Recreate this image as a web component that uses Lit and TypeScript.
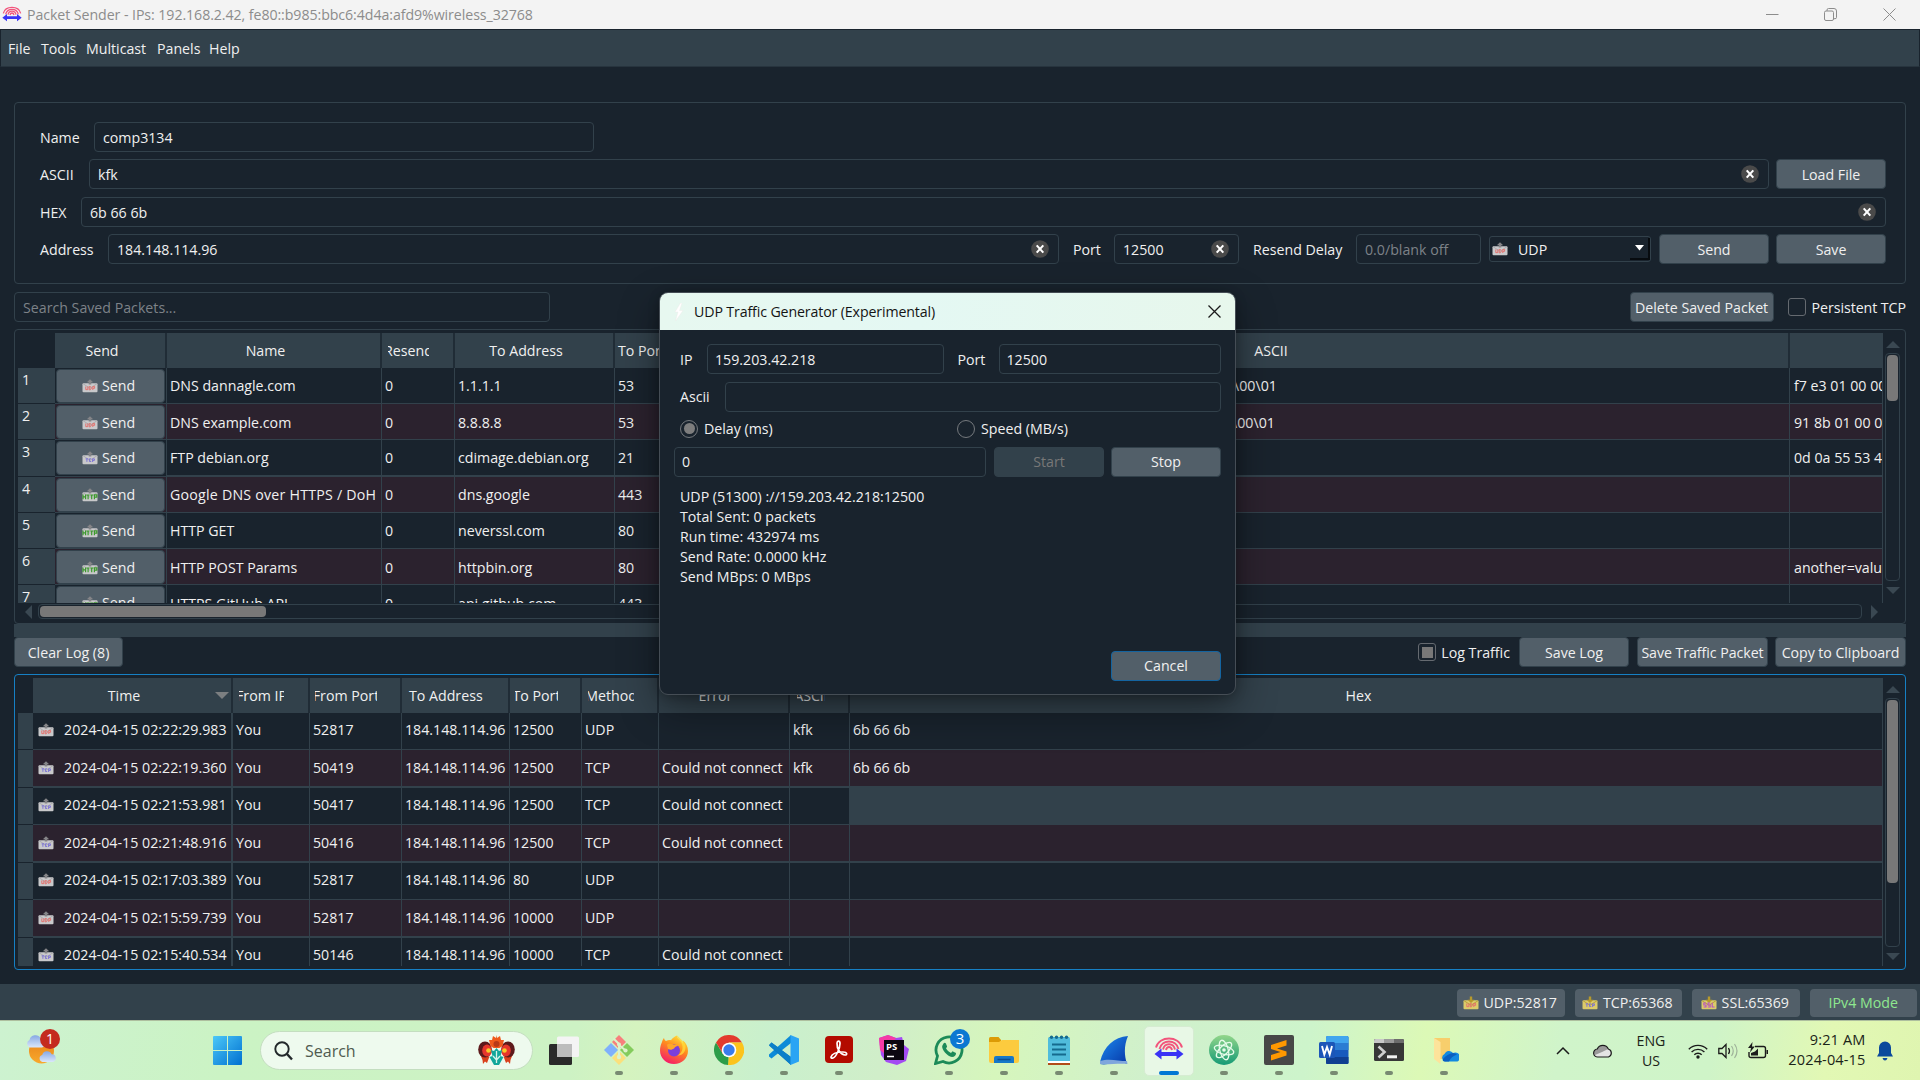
import { LitElement, html, css, svg } from "lit";
import { customElement } from "lit/decorators.js";

type Kind = "UDP" | "TCP" | "HTTP" | "SSL";
const INK: Record<Kind, string> = { UDP: "#e4706c", TCP: "#7b72d4", HTTP: "#3c9a2c", SSL: "#b650c8" };

const envelope = (kind: Kind, gold = false) => html`
  <svg class="env" width="16" height="14" viewBox="0 0 16 15" preserveAspectRatio="none">
    <rect x="0.5" y="4.5" width="15" height="9.7" rx="1" fill=${gold ? "#dccb6a" : "#c9c9cb"} />
    <path d="M1 5L8 10L15 5" fill="none" stroke=${gold ? "#b39b34" : "#a6a6aa"} stroke-width="0.9" />
    ${gold
      ? svg`<path d="M6.8 0.5h2.4v3.6h2.3L8 7.6L4.5 4.1h2.3z" fill="#b79a2c"/>`
      : svg`<path d="M8 0.3L11.2 3.6H9.3V6H6.7V3.6H4.8z" fill="#858588"/>`}
    ${kind === "HTTP"
      ? svg`<path d="M1 7v5M3.6 7v5M1 9.5h2.6M4.6 7.5h3M6.1 7.5V12M8.2 7.5h3M9.7 7.5V12M12.4 12V7.4h2.4v2.4h-2.4" fill="none" stroke=${INK.HTTP} stroke-width="1.2"/>`
      : kind === "UDP"
      ? svg`<path d="M3.8 8v3.4h2V8M7.2 8v3.6h1l1-1V9l-1-1zM10.8 11.8V8h1.8v2h-1.8" fill="none" stroke=${INK.UDP} stroke-width="1"/>`
      : kind === "SSL"
      ? svg`<path d="M5 7.6H2.8v2H5v2.1H2.6M9.2 7.6H7v2h2.2v2.1H6.8M11.2 7.2v4.5h2.4" fill="none" stroke=${INK.SSL} stroke-width="1.1"/>`
      : svg`<path d="M3.6 8.4h2.6M4.9 8.4V11.6M9.2 8.4H7.4v2.8h1.8M10.6 11.8V8.4h1.800v1.700h-1.800" fill="none" stroke=${INK.TCP} stroke-width="1"/>`}
  </svg>`;

const clearIcon = html`<svg class="clear" width="18" height="18" viewBox="0 0 18 18">
  <circle cx="9" cy="9" r="8.8" fill="#4a4a4a" />
  <path d="M5.7 5.4L12.3 12.6M12.3 5.4L5.7 12.6" stroke="#fff" stroke-width="2.1" />
</svg>`;

const senderLogo = (w: number) => html`<svg width=${w} height=${w} viewBox="0 0 30 30">
  <g fill="none" stroke="#f2557c" stroke-width="1.9">
    <path d="M2 12.5C5 0.5 25 0.5 28 12.5" /><path d="M5.5 14C8 4 22 4 24.5 14" />
    <path d="M9 14.5C10.5 7.5 19.5 7.5 21 14.5" /><path d="M12 15C13 11 17 11 18 15" />
  </g>
  <path d="M0.5 19L7.5 13.5V17H22.5V13.5L29.5 19L22.5 24.5V21H7.5V24.5Z" fill="#3a33f5" />
</svg>`;

const packets: { kind: Kind; name: string; addr: string; port: string; ascii: string; hex: string }[] = [
  { kind: "UDP", name: "DNS dannagle.com", addr: "1.1.1.1", port: "53", ascii: "\\00\\01", hex: "f7 e3 01 00 00" },
  { kind: "UDP", name: "DNS example.com", addr: "8.8.8.8", port: "53", ascii: "\\00\\01", hex: "91 8b 01 00 00" },
  { kind: "TCP", name: "FTP debian.org", addr: "cdimage.debian.org", port: "21", ascii: "", hex: "0d 0a 55 53 45" },
  { kind: "HTTP", name: "Google DNS over HTTPS / DoH", addr: "dns.google", port: "443", ascii: "", hex: "" },
  { kind: "HTTP", name: "HTTP GET", addr: "neverssl.com", port: "80", ascii: "", hex: "" },
  { kind: "HTTP", name: "HTTP POST Params", addr: "httpbin.org", port: "80", ascii: "", hex: "another=value" },
  { kind: "HTTP", name: "HTTPS GitHub API", addr: "api.github.com", port: "443", ascii: "", hex: "" },
];

const ERR = "Could not connect";
const log: [string, string, string, Kind, string, string, string][] = [
  ["2024-04-15 02:22:29.983", "52817", "12500", "UDP", "", "kfk", "6b 66 6b"],
  ["2024-04-15 02:22:19.360", "50419", "12500", "TCP", ERR, "kfk", "6b 66 6b"],
  ["2024-04-15 02:21:53.981", "50417", "12500", "TCP", ERR, "", ""],
  ["2024-04-15 02:21:48.916", "50416", "12500", "TCP", ERR, "", ""],
  ["2024-04-15 02:17:03.389", "52817", "80", "UDP", "", "", ""],
  ["2024-04-15 02:15:59.739", "52817", "10000", "UDP", "", "", ""],
  ["2024-04-15 02:15:40.534", "50146", "10000", "TCP", ERR, "", ""],
];

const ico = (body: unknown) => html`<svg width="30" height="30" viewBox="0 0 30 30">${body}</svg>`;

const apps: { art: unknown; run?: boolean; active?: boolean; badge?: string }[] = [
  { run: true, art: ico(svg`
    <path d="M15 0l7 7-7 7-7-7z" fill="#f77f7c"/><path d="M7 8l7 7-7 7-7-7z" fill="#7fb0fb"/>
    <path d="M23 8l7 7-7 7-7-7z" fill="#84cc5c"/><path d="M15 16l7 7-7 7-7-7z" fill="#fbe07c"/>
    <path d="M9.5 3.5L15 9v13M15 10l6 5" stroke="#dcf3cb" stroke-width="2" fill="none"/>
    <circle cx="15" cy="9.5" r="2" fill="#dcf3cb"/><circle cx="15" cy="22" r="2.2" fill="#dcf3cb"/><circle cx="21.5" cy="15.5" r="2.1" fill="#dcf3cb"/>`) },
  { run: true, art: ico(svg`
    <defs><linearGradient id="ff" x1="0.8" y1="0" x2="0.3" y2="1"><stop offset="0" stop-color="#ffe83c"/><stop offset=".45" stop-color="#ff8a1e"/><stop offset="1" stop-color="#f5186c"/></linearGradient></defs>
    <path d="M3 7c.5-2 1.5-3.5 2-4 .3 1.700 1 2.500 2 3 2-1 4-1 5-.8C13 3.500 16 1 18 .5c-.3 2 1 3 3 4.500 1 .7 2 2 2.500 3.500.6-.5.8-2 .5-3 3 2.500 5 6 5 10.500C29 23 23 29 15 29S1 23 1 15.500C1 12 2 9 3 7z" fill="url(#ff)"/>
    <circle cx="15" cy="15.500" r="6" fill="#7a3fdc"/><path d="M8 10c2-2 5-1 7 0 2-.5 3 0 4 1-2 0-3 1-4 2.500-2 1-3 2-6 .5z" fill="#ffa62a"/>
    <path d="M18 .5c-.3 4 5 5 5.500 11 .5 5-3 8-5 9 6 0 8.500-5 8-9.500-.5-4-4-6-8.500-10.500z" fill="#ffd93a" opacity=".8"/>`) },
  { run: true, art: ico(svg`
    <path d="M15 15L28 7.500A15 15 0 0 1 14 30z" fill="#fcc31c"/>
    <path d="M15 15L14 30A15 15 0 0 1 2 7.500L9 19z" fill="#2c9d49"/><path d="M2 7.500L9 19l6-11.500h13A15 15 0 0 0 2 7.500z" fill="#e33b2e"/>
    <path d="M14.300 30L21.500 18.500 28 7.500H15l6 8z" fill="#fcc31c"/><circle cx="15" cy="15" r="7.300" fill="#fff"/><circle cx="15" cy="15" r="5.700" fill="#3a7cec"/>`) },
  { run: true, art: ico(svg`
    <path d="M22 0L0 19.500v2L2.500 23.500 22 8z" fill="#0d8bd8"/><path d="M22 30L0 10.500 2.500 7.500 22 22z" fill="#0674bb"/>
    <path d="M0 10L2.500 7.500 22 22v8z" fill="#0c7fc9"/><path d="M21.500 0L30 3.500v23L21.500 30z" fill="#2aa4f4"/>`) },
  { run: true, art: ico(svg`
    <rect x="1" y="1" width="28" height="27" rx="4" fill="#b30b00"/>
    <path d="M7 22c1-3.500 7-5 12-5 4.500 0 4.500 3 2 3-4 0-8.500-6-8-12 .3-2.500 3-2.500 3 .5 0 5-4 13.500-7 14.500-1.500.5-2.200 0-2-1z" fill="none" stroke="#fff" stroke-width="1.7"/>`) },
  { art: ico(svg`
    <path d="M0 3L9 0l8 3 6-1 2 8 5 4-3 12-9 4-11-3L2 20z" fill="#a34bf2"/><path d="M0 3L9 0l8 3-11 16-5-4z" fill="#f53ba6"/>
    <rect x="5" y="5" width="20" height="20" fill="#0b0710"/>
    <text x="7" y="14.500" font-family="Open Sans" font-weight="700" font-size="9.500" fill="#fff">PS</text><path d="M8 21.500h7" stroke="#fff" stroke-width="1.500"/>`) },
  { run: true, badge: "3", art: ico(svg`
    <path d="M1.500 28.500l2-7.500A13 13 0 1 1 9 26.500z" fill="none" stroke="#1c8a58" stroke-width="2.800"/>
    <path d="M9.500 8.500c1-1 2-.8 2.500.3l1 2.400c.3.800-.5 1.400-1 2.100 1.200 2.200 2.700 3.600 5 4.600l1.500-1.700 3.500 1.700c.3 2.100-1.500 4-4 4C13 21.500 7.500 14 8.200 11z" fill="#1c8a58"/>`) },
  { run: true, art: ico(svg`
    <path d="M0 3.500q0-1.500 1.500-1.500h8l2.500 3v6H0z" fill="#dc9b06"/><path d="M0 7h10l3-2h17v21q0 2-2 2H2q-2 0-2-2z" fill="#fccb3e"/>
    <path d="M5 28v-5q0-2 2-2h16q2 0 2 2v5z" fill="#1778c8"/><path d="M8.500 24.500h13" stroke="#0b4f92" stroke-width="1.500"/>`) },
  { run: true, art: ico(svg`
    <rect x="4" y="2" width="22" height="25" rx="1.500" fill="#50bcdc"/><path d="M4 26h22v4H4z" fill="#b14c18"/><path d="M4 26h22v2H4z" fill="#fff"/>
    <path d="M8 9.500h14M8 14.500h14M8 19.500h14" stroke="#156a8e" stroke-width="2"/><g fill="#156a8e"><circle cx="7.500" cy="2.200" r="1.700"/><circle cx="12.500" cy="2.200" r="1.700"/><circle cx="17.500" cy="2.200" r="1.700"/><circle cx="22.500" cy="2.200" r="1.700"/></g>`) },
  { run: true, art: ico(svg`
    <defs><linearGradient id="ws" x1="0" y1="0" x2="1" y2="1"><stop offset="0" stop-color="#1d8bf0"/><stop offset="1" stop-color="#0636a6"/></linearGradient></defs>
    <path d="M1 27C5 11 15 2 29 1c-4 9-4 19-1 28C20 25 9 31 1 29z" fill="url(#ws)"/><path d="M1 26c9-3 18 0 27 0l.5 3C20 28 8 30 1 29z" fill="#7fa6dc"/>`) },
  { run: true, active: true, art: senderLogo(30) },
  { run: true, art: ico(svg`
    <defs><linearGradient id="at" x1="0" y1="0" x2="0" y2="1"><stop offset="0" stop-color="#92d68a"/><stop offset="1" stop-color="#159a75"/></linearGradient></defs>
    <circle cx="15" cy="15" r="15" fill="url(#at)"/><g fill="none" stroke="#e6fbea" stroke-width="1.300"><ellipse cx="15" cy="15" rx="10" ry="4.200" transform="rotate(15 15 15)"/><ellipse cx="15" cy="15" rx="10" ry="4.200" transform="rotate(75 15 15)"/><ellipse cx="15" cy="15" rx="10" ry="4.200" transform="rotate(135 15 15)"/></g><circle cx="15" cy="15" r="1.800" fill="#e6fbea"/>`) },
  { run: true, art: ico(svg`
    <rect width="30" height="30" rx="2" fill="#474747"/><path d="M7 10l15.500-5v5.500L13 13.600l9.500 2.900V20.500L7 25.500V20l9.500-3L7 14z" fill="#ff9800"/>`) },
  { run: true, art: ico(svg`
    <rect x="7" y="1" width="22.500" height="28" rx="1.500" fill="#185abd"/><path d="M7 8V2.500Q7 1 8.500 1H28q1.500 0 1.500 1.500V8z" fill="#41a5ee"/><path d="M7 8h22.500v7H7z" fill="#2b7cd3"/><path d="M7 22h22.500v5.500q0 1.500-1.500 1.500H8.500Q7 29 7 27.500z" fill="#103f91"/>
    <rect x="0" y="7" width="16" height="16" rx="1.500" fill="#1c56b8"/><path d="M3 11l2.300 8.500L8 12l2.700 7.500L13 11" fill="none" stroke="#fff" stroke-width="1.900"/>`) },
  { run: true, art: ico(svg`
    <rect y="4" width="30" height="22" rx="1.500" fill="#373737"/><path d="M0 8V5.500Q0 4 1.500 4H10v4z" fill="#c8c8c8"/><path d="M10 4h10v4H10z" fill="#9a9a9a"/><path d="M20 4h8.500Q30 4 30 5.500V8H20z" fill="#6c6c6c"/>
    <path d="M4.500 11.500l6 5.500-6 5.500" fill="none" stroke="#cfcfcf" stroke-width="2.600"/><path d="M13 21.800h10" stroke="#f2f2f2" stroke-width="3"/>`) },
  { run: true, art: ico(svg`
    <path d="M5 3h16v21H5z" fill="#f7ce6c"/><path d="M5 3l6.500 4v22L5 24z" fill="#fde39b"/>
    <path d="M16 26.500a4 4 0 0 1-.5-7.500 5 5 0 0 1 8.500-1 4.200 4.200 0 0 1 4.500 8.500z" fill="#1389e0"/><path d="M14 24q4-5 10-6 2 0 4 1.500-6 2-8 7h-5q-2-1-1-2.500z" fill="#0a5fc0"/>`) },
];

@customElement("app-root")
export class AppRoot extends LitElement {
  static styles = css`
    :host { display: block; width: 1920px; height: 1080px; overflow: hidden; position: relative; background: #19232d; color: #f0f0f0;
      font: 14.2px/20px "Open Sans", "Noto Sans", sans-serif; }
    * { box-sizing: border-box; }
    div, span, button { white-space: nowrap; }
    svg { display: block; flex: none; }
    .env { margin-bottom: 1px; }
    .screen { display: flex; flex-direction: column; height: 1080px; }
    .title { height: 29px; flex: none; background: #f3f3f3; color: #8c8c8c; display: flex; align-items: center; padding: 0 25px 0 2px; }
    .title span { margin-left: 5px; flex: 1; letter-spacing: -0.075px; }
    .title .wc { display: grid; grid-template-columns: 58px 59px 12px; align-items: center; }
    .menu { height: 38px; flex: none; background: #32414b; border: 1px solid #19232d; border-bottom: 1px solid #27343e; display: grid; grid-template-columns: 33px 45px 71px 52px 60px; padding: 2px 0 0 7px; align-items: center; }
    .main { height: 917px; flex: none; padding: 35px 14px 0; display: flex; flex-direction: column; }
    .group { height: 182px; flex: none; border: 1px solid #32414b; border-radius: 4px; padding: 19px 19px 0 25px; }
    .row { display: flex; height: 30px; align-items: center; margin-bottom: 7px; }
    .row.loose { margin-bottom: 8px; }
    .field { height: 30px; border: 1px solid #32414b; border-radius: 4px; padding: 0 9px 0 8px; display: flex; align-items: center; justify-content: space-between; }
    .lab { padding-top: 2px; }
    .val { padding-top: 2px; }
    .grow { flex: 1; }
    .hint { color: #7d8288; }
    .btn { height: 30px; background: #525f69; border: 1px solid #32414b; border-radius: 4px; display: flex; align-items: center; justify-content: center; padding-top: 1px; flex: none; }
    .l54 { width: 54px; } .l49 { width: 49px; } .l41 { width: 41px; } .l68 { width: 68px; } .l103 { width: 103px; }
    .w500 { width: 500px; } .w125 { width: 125px; } .w110 { width: 110px; }
    .g14 { margin-left: 14px; } .g8 { margin-left: 8px; } .g7 { margin-left: 7px; } .g9 { margin-left: 9px; } .g6 { margin-left: 6px; } .g5 { margin-left: 5px; } .g3 { margin-left: 3px; }
    .combo { width: 162px; height: 26px; border: 1px solid #32414b; border-radius: 3px; display: flex; align-items: center; padding-left: 2px; margin-left: 8px; }
    .combo .sel { margin-left: 10px; flex: 1; padding-top: 2px; }
    .combo .drop { width: 20px; height: 22px; border-right: 2px solid #070b0f; border-bottom: 2px solid #070b0f; display: grid; place-items: center; }
    .tools { height: 30px; flex: none; margin-top: 8px; display: flex; align-items: center; }
    .search { width: 536px; padding-left: 8px; }
    .push { margin-left: auto; }
    .w144 { width: 144px; }
    .check { width: 18px; height: 18px; border: 1px solid #656a70; border-radius: 3px; display: grid; place-items: center; flex: none; }
    .check i { width: 11px; height: 11px; background: #787878; }
    .frame { height: 295px; flex: none; border: 1px solid #32414b; border-radius: 4px; padding: 3px; display: grid; grid-template-columns: 1865px 18px; }
    .saved { margin-top: 7px; grid-template-rows: 270px 17px; }
    .focus { border-color: #1680c4; margin-top: 7px; height: 296px; }
    .view { overflow: hidden; }
    .cols { display: grid; grid-template-columns: 37px 112px 215px 73px 160px 136px 1039px 93px; }
    .lcols { display: grid; grid-template-columns: 15px 200px 77px 92px 108px 72px 77px 131px 60px 1033px; }
    .head { height: 35px; }
    .head > div { background: #32414b; border-right: 2px solid #202c36; display: flex; justify-content: center; align-items: center; overflow: hidden; position: relative; }
    .head > div:first-child { background: #19232d; border: 0; }
    .head > div:last-child { border: 0; }
    .head > .pr { padding-right: 16px; }
    .head > .pl { padding-left: 3px; }
    .clip { overflow: hidden; display: flex; justify-content: center; }
    .c41 { width: 41px; } .c45 { width: 45px; } .c62 { width: 62px; } .c43 { width: 43px; } .c46 { width: 46px; } .c28 { width: 28px; }
    .hl { justify-content: flex-start !important; }
    .body1 { height: 36px; } .body1:nth-child(4) { height: 37px; }
    .body2 { height: 37px; } .body2:nth-child(odd) { height: 38px; }
    .cell { border-right: 1px solid #32414b; border-bottom: 1px solid #32414b; padding-left: 3px; display: flex; align-items: center; overflow: hidden; }
    .body1 .cell:last-child { padding-left: 4px; }
    .body1:nth-child(3) .cell, .body1:nth-child(7) .cell, .body1:nth-child(8) .cell { padding-top: 2px; }
    .body2:nth-child(even) .cell { padding-bottom: 2px; }
    .body2:nth-child(odd) .cell, .body1:nth-child(4) .cell { border-bottom-width: 2px; }
    .body2 .cell.time { border-right-width: 2px; padding-left: 5px; }
    .time span { margin-left: 10px; letter-spacing: 0.03px; }
    .body1 .wide { letter-spacing: 0.23px; }
    .alt .cell { background: #2b222e; }
    .num { background: #32414b; border-bottom: 1px solid #19232d; padding: 2px 0 0 4px; }
    .lcols .cell.picked { background: #32414b; }
    .sendcell { padding: 0 1px 0 1px; border-bottom: 1px solid #32414b; border-right: 1px solid #32414b; background: #19232d; }
    .alt .sendcell { background: #2b222e; }
    .sendbtn { height: 34px; background: #525f69; border: 1px solid #32414b; border-radius: 4px; display: flex; align-items: center; padding-left: 25px; gap: 4px; margin-top: 1px; }
    .body1:nth-child(3) .sendbtn, .body1:nth-child(7) .sendbtn { padding-top: 2px; }
    .body1 .asc { padding-left: 483px; } .alt .asc { padding-left: 481px; }
    .vs { display: flex; flex-direction: column; align-items: center; padding-top: 8px; padding-left: 1px; }
    .vtrack { width: 15px; border: 1px solid #32414b; border-radius: 4px; padding: 1px; }
    .thumb { background: #787878; border-radius: 4px; }
    .v1 { height: 228px; margin: 5px 0 6px; } .v1 .thumb { height: 46px; }
    .v2 { height: 249px; margin: 5px 0 6px; } .v2 .thumb { height: 183px; }
    .hs { display: flex; align-items: center; padding-left: 7px; }
    .htrack { width: 1824px; height: 15px; border: 1px solid #32414b; border-radius: 4px; padding: 1px; margin: 0 9px 0 6px; }
    .htrack .thumb { width: 226px; height: 11px; }
    .split { height: 13px; flex: none; background: #32414b; }
    .logbar { margin-top: 0; }
    .clearlog { width: 109px; }
    .w131 { width: 131px; }
    .tight { letter-spacing: -0.05px; }
    .sort { position: absolute; right: 2px; top: 14px; }
    .status { height: 36px; flex: none; background: #32414b; display: flex; justify-content: flex-end; gap: 10px; padding: 5px 3px 0 0; }
    .status div { width: 107.5px; height: 28px; background: #525f69; border-radius: 4px; display: flex; align-items: center; justify-content: center; gap: 5px; padding-right: 2px; }
    .status .mode { color: #8fe88f; padding: 0; }
    .task { height: 60px; flex: none; border-top: 1px solid #aebf9f; display: flex; align-items: center; padding: 0 27px 0 25px; color: #1b2418;
      background: linear-gradient(100deg, #cdf2d0 0%, #cbf3c4 12%, #cdf2c4 30%, #d5f3bf 33%, #c9f0cd 40%, #d0eec9 46%, #d6f6bc 52%, #d0f0cc 60%, #cdf4cb 68%, #dcf9b6 74%, #d0f4ca 81%, #cff4c8 89%, #e2f8b4 95%, #dff5b0 100%); }
    .weather { position: relative; width: 36px; height: 44px; }
    .badge { position: absolute; left: 15px; top: 0; width: 20px; height: 20px; border-radius: 50%; background: #c42b1f; color: #fff; font-size: 14px; line-height: 19px; text-align: center; }
    .win { margin: 0 18px 0 152px; }
    .pill { width: 273px; height: 39px; border-radius: 20px; background: #eefaee; border: 1px solid #c4dec0; display: flex; align-items: center; padding: 0 17px 0 13px; margin-right: 16px; color: #505b50; font-size: 16px; }
    .pill span { flex: 1; margin-left: 12px; }
    .apps { display: flex; margin-left: 12px; }
    .app { width: 55px; height: 59px; display: grid; place-items: center; position: relative; padding-bottom: 1px; }
    .app.on::before { content: ""; position: absolute; left: 3px; top: 5px; width: 48px; height: 48px; border-radius: 5px; background: #e8f8e6; border: 1px solid #d6ecd2; }
    .app > svg { position: relative; }
    .app.run::after { content: ""; position: absolute; bottom: 5px; left: 23.500px; width: 8px; height: 4px; border-radius: 2px; background: #788a72; }
    .app.on::after { left: 17.500px; width: 20px; background: #0078d4; }
    .app .badge { left: 29px; top: 8px; background: #0c78d2; font-size: 15px; }
    .tray { margin-left: auto; display: grid; grid-template-columns: 37px 43px 30px 22px 30px 30px 20px 97.500px 11.500px 16px; align-items: center; font-size: 14.200px; line-height: 20px; }
    .ctr { text-align: center; }
    .end { text-align: right; font-size: 14.500px; letter-spacing: 0.15px; margin-top: -1px; }
    .dialog { position: absolute; left: 659px; top: 292px; width: 577px; height: 403px; border: 1px solid #454d55; border-radius: 9px; background: #19232d; overflow: hidden; }
    .shadow { position: absolute; left: 660px; top: 293px; width: 575px; height: 401px; border-radius: 9px; box-shadow: 0 14px 40px rgba(0, 0, 0, .42), 0 2px 12px rgba(0, 0, 0, .3); }
    .dtitle { height: 37px; background: linear-gradient(90deg, #e7f8f0, #e4f8f3 45%, #e7f7ec); color: #141414; display: flex; align-items: center; padding: 0 14px 0 14px; }
    .dtitle span { flex: 1; margin-left: 10px; letter-spacing: -0.13px; }
    .drow { display: flex; align-items: center; height: 30px; padding: 0 14px 0 20px; margin-top: 7.500px; }
    .drow.first { margin-top: 14px; } .drow.opts { height: 18px; margin-top: 8px; } .drow.act { padding-left: 14px; margin-top: 9px; }
    .drow.last { margin-top: 0; }
    .radio { width: 18px; height: 18px; border: 1px solid #75797d; border-radius: 50%; display: grid; place-items: center; flex: none; margin-right: 6px; }
    .radio i { width: 11px; height: 11px; border-radius: 50%; background: #7d7d7d; }
    .opt1 { width: 253px; } .l27 { width: 27px; } .l45 { width: 45px; } .w237 { width: 236.500px; } .w312 { width: 312px; }
    .dialog .field { padding-left: 7px; } .dialog .val, .dialog .lab { padding-top: 1px; }
    .off { background: #32414b; color: #787878; }
    .stats { padding: 10px 0 0 20px; height: 174px; line-height: 20px; }
    .primary { border-color: #1464a0; }
  `;

  private tri(dir: "u" | "d" | "l" | "r", fill = "#3a4852") {
    const d = { u: "M7 0L14 7H0z", d: "M0 0H14L7 7z", l: "M7 0V14L0 7z", r: "M0 0L7 7L0 14z" }[dir];
    const v = dir === "u" || dir === "d";
    return html`<svg width=${v ? 14 : 7} height=${v ? 7 : 14} viewBox=${v ? "0 0 14 7" : "0 0 7 14"}><path d=${d} fill=${fill} /></svg>`;
  }

  private val(text: string) {
    return html`<span class="val">${text}</span>`;
  }

  private form() {
    return html`<div class="group">
      <div class="row"><div class="lab l54">Name</div><div class="field w500">${this.val("comp3134")}</div></div>
      <div class="row loose"><div class="lab l49">ASCII</div><div class="field grow">${this.val("kfk")}${clearIcon}</div><div class="btn w110 g7">Load File</div></div>
      <div class="row"><div class="lab l41">HEX</div><div class="field grow">${this.val("6b 66 6b")}${clearIcon}</div></div>
      <div class="row">
        <div class="lab l68">Address</div><div class="field grow">${this.val("184.148.114.96")}${clearIcon}</div>
        <div class="lab l41 g14">Port</div><div class="field w125">${this.val("12500")}${clearIcon}</div>
        <div class="lab l103 g14">Resend Delay</div><div class="field w125 hint">${this.val("0.0/blank off")}</div>
        <div class="combo">${envelope("UDP")}<div class="sel">UDP</div>
          <div class="drop"><svg width="9" height="6" viewBox="0 0 9 6"><path d="M0 0H9L4.5 5.500z" fill="#fff" /></svg></div></div>
        <div class="btn w110 g8">Send</div><div class="btn w110 g7">Save</div>
      </div>
    </div>`;
  }

  private savedTable() {
    return html`<div class="frame saved">
      <div class="view">
        <div class="cols head">
          <div></div><div class="pr">Send</div><div class="pr">Name</div><div class="hl"><div class="clip c41 g6">Resend</div></div>
          <div class="pr">To Address</div><div class="hl"><div class="g3">To Port</div></div><div class="pl">ASCII</div><div></div>
        </div>
        ${packets.map((p, i) => html`<div class="cols body1 ${i % 2 ? "alt" : ""}">
          <div class="num">${i + 1}</div>
          <div class="sendcell"><div class="sendbtn">${envelope(p.kind)}<span>Send</span></div></div>
          <div class="cell ${p.name.length > 20 ? "wide" : ""}">${p.name}</div><div class="cell">0</div><div class="cell">${p.addr}</div>
          <div class="cell">${p.port}</div><div class="cell asc">${p.ascii}</div><div class="cell">${p.hex}</div>
        </div>`)}
      </div>
      <div class="vs">${this.tri("u")}<div class="vtrack v1"><div class="thumb"></div></div>${this.tri("d")}</div>
      <div class="hs">${this.tri("l")}<div class="htrack"><div class="thumb"></div></div>${this.tri("r")}</div>
    </div>`;
  }

  private logTable() {
    return html`<div class="frame focus">
      <div class="view">
        <div class="lcols head">
          <div></div><div class="pr">Time<div class="sort">${this.tri("d", "#7c7f81")}</div></div>
          <div class="hl"><div class="clip c45 g6">From IP</div></div>
          <div class="hl"><div class="clip c62 g5">From Port</div></div>
          <div class="hl"><div class="g7">To Address</div></div>
          <div class="hl"><div class="clip c43 g5">To Port</div></div>
          <div class="hl"><div class="clip c46 g6">Method</div></div>
          <div class="pr">Error</div>
          <div class="hl"><div class="clip c28 g7">ASCII</div></div>
          <div class="pr">Hex</div>
        </div>
        ${log.map((r, i) => html`<div class="lcols body2 ${i % 2 ? "alt" : ""}">
          <div class="num"></div>
          <div class="cell time">${envelope(r[3])}<span>${r[0]}</span></div>
          <div class="cell">You</div><div class="cell">${r[1]}</div><div class="cell">184.148.114.96</div>
          <div class="cell">${r[2]}</div><div class="cell">${r[3]}</div><div class="cell">${r[4]}</div>
          <div class="cell">${r[5]}</div><div class="cell ${i === 2 ? "picked" : ""}">${r[6]}</div>
        </div>`)}
      </div>
      <div class="vs">${this.tri("u")}<div class="vtrack v2"><div class="thumb"></div></div>${this.tri("d")}</div>
    </div>`;
  }

  private taskbar() {
    return html`<div class="task">
      <div class="weather">
        <svg width="36" height="44" viewBox="0 0 36 44">
          <defs><linearGradient id="sun" x1="0" y1="0" x2="0" y2="1"><stop offset="0" stop-color="#e8821a" /><stop offset="1" stop-color="#f8a92c" /></linearGradient>
            <linearGradient id="cld" x1="0" y1="0" x2="0" y2="1"><stop offset="0" stop-color="#86a8e4" /><stop offset="1" stop-color="#dbe7fa" /></linearGradient></defs>
          <circle cx="16.500" cy="22" r="12.500" fill="url(#sun)" />
          <path d="M5 18.500a4 4 0 0 1-.5-7.500 6 6 0 0 1 11.200-1.500A4.600 4.600 0 0 1 17 18.500z" fill="url(#cld)" />
          <path d="M17.500 33a3.600 3.600 0 0 1-.3-7 5 5 0 0 1 9.400-.8 4 4 0 0 1 1.400 7.800z" fill="url(#cld)" />
        </svg>
        <div class="badge">1</div>
      </div>
      <svg class="win" width="29" height="29" viewBox="0 0 29 29">
        <defs><linearGradient id="wn" x1="0" y1="0" x2="1" y2="1"><stop offset="0" stop-color="#4cc8f8" /><stop offset="1" stop-color="#0070d0" /></linearGradient></defs>
        <path d="M0 1q0-1 1-1h13v14H0zM15 0h13q1 0 1 1v13H15zM0 15h14v14H1q-1 0-1-1zM15 15h14v13q0 1-1 1H15z" fill="url(#wn)" />
      </svg>
      <div class="pill">
        <svg width="19" height="20" viewBox="0 0 19 20"><circle cx="8" cy="8" r="6.700" fill="none" stroke="#22282a" stroke-width="1.900" /><path d="M13 13l5 5.500" stroke="#22282a" stroke-width="2.400" /></svg>
        <span>Search</span>
        <svg width="37" height="32" viewBox="0 0 37 32">
          <path d="M2.500 20l9 1.500L9 28l-2-1.500L5 29l-.5-4zM34.500 20l-9 1.500L28 28l2-1.500L32 29l.5-4z" fill="#d9401c" />
          <ellipse cx="7" cy="14.500" rx="6.800" ry="8" fill="#5e1a1c" /><ellipse cx="30" cy="14.500" rx="6.800" ry="8" fill="#5e1a1c" />
          <ellipse cx="9" cy="15.500" rx="4.800" ry="6" fill="#e6362c" /><ellipse cx="28" cy="15.500" rx="4.800" ry="6" fill="#e6362c" />
          <circle cx="10.500" cy="15.500" r="2.300" fill="#f7c928" /><circle cx="26.500" cy="15.500" r="2.300" fill="#f7c928" />
          <path d="M11 5l3 0 1-4 3 2 .5-3 .5 3 3-2 1 4 3 0-1.500 6-3 2h-6l-3-2z" fill="#ef5a1d" /><circle cx="18.500" cy="9" r="3" fill="#b83a18" />
          <path d="M18.500 13l2.500 3 3-1-1.500 6 3 1-4.500 8h-5l-4.500-8 3-1-1.500-6 3 1z" fill="#12a79b" /><path d="M18.500 16v12M15 21l3.500 4 3.500-4" fill="none" stroke="#d8f4ea" stroke-width="1.300" />
        </svg>
      </div>
      <svg width="30" height="30" viewBox="0 0 30 30"><rect y="8" width="23" height="21" rx="1.500" fill="#2a2a2a" /><rect x="8" y="0.500" width="22" height="20.500" rx="1.500" fill="#f4f4f4" /><path d="M8 8h15v13H8z" fill="#bcbcbc" /></svg>
      <div class="apps">${apps.map((a) => html`<div class="app ${a.run ? "run" : ""} ${a.active ? "on" : ""}">${a.art}${a.badge ? html`<div class="badge">${a.badge}</div>` : ""}</div>`)}</div>
      <div class="tray">
        <svg width="14" height="9" viewBox="0 0 14 9"><path d="M1 8l6-6 6 6" fill="none" stroke="#1b1b1b" stroke-width="1.500" /></svg>
        <svg width="20" height="15" viewBox="0 0 20 15"><path d="M5 14a4 4 0 0 1-.7-8 6 6 0 0 1 11 0A4.200 4.200 0 0 1 15.500 14z" fill="#e4e4e4" /><path d="M4.300 6a6 6 0 0 1 10.700 0L9 9 2 12Q-1 8 4.300 6z" fill="#9a9a9a" /><path d="M5 14a4 4 0 0 1-.7-8 6 6 0 0 1 11 0A4.200 4.200 0 0 1 15.500 14z" fill="none" stroke="#1b1b1b" stroke-width="1.200" /></svg>
        <div class="ctr">ENG<br />US</div>
        <span></span>
        <svg width="20" height="16" viewBox="0 0 20 16"><g fill="none" stroke="#1b1b1b" stroke-width="1.400"><path d="M.8 6.200a13 13 0 0 1 18.400 0" /><path d="M3.600 9a9 9 0 0 1 12.800 0" /><path d="M6.300 11.800a5.200 5.200 0 0 1 7.400 0" /></g><circle cx="10" cy="14" r="1.700" fill="#1b1b1b" /></svg>
        <svg width="20" height="16" viewBox="0 0 20 16"><path d="M.8 5.500v5h3.200L8 14.500v-13L4 5.500z" fill="none" stroke="#1b1b1b" stroke-width="1.300" /><path d="M10.500 5q2 3 0 6" fill="none" stroke="#1b1b1b" stroke-width="1.300" /><path d="M13.500 3q3.500 5 0 10M16.500 1q5 7 0 14" fill="none" stroke="#9fb29a" stroke-width="1.200" /></svg>
        <svg width="20" height="18" viewBox="0 0 20 18"><path d="M7 4.500h8.500q2 0 2 2v7q0 2-2 2H3q-2 0-2-2V10" fill="none" stroke="#1b1b1b" stroke-width="1.400" /><path d="M18.500 8v4h1.500V8zM3 13.500V11l4-1.500 3-3v7z" fill="#1b1b1b" /><path d="M4.500 0L0 6h3l-1 4.500L6.800 4.500H4z" fill="#1b1b1b" /></svg>
        <div class="end">9:21 AM<br />2024-04-15</div>
        <span></span>
        <svg width="16" height="20" viewBox="0 0 16 20"><path d="M8 0.500a6 6 0 0 1 6 6V12l2 3.500H0L2 12V6.500a6 6 0 0 1 6-6z" fill="#0b4a9c" /><path d="M5.500 17h5q-.7 2.500-2.500 2.500T5.500 17z" fill="#0b4a9c" /></svg>
      </div>
    </div>`;
  }

  private dialog() {
    return html`<div class="shadow"></div><div class="dialog">
      <div class="dtitle">
        <svg width="10" height="18" viewBox="0 0 10 18"><path d="M6.500 0L1 9h3L1.500 18 9 7.500H5.500L8 0z" fill="#fff" stroke="#f1ece8" stroke-width=".4" /></svg>
        <span>UDP Traffic Generator (Experimental)</span>
        <svg width="13" height="13" viewBox="0 0 13 13"><path d="M.5.5l12 12M12.500.5l-12 12" stroke="#1b1b1b" stroke-width="1.300" /></svg>
      </div>
      <div class="drow first"><div class="lab l27">IP</div><div class="field w237">${this.val("159.203.42.218")}</div><div class="lab l41 g14">Port</div><div class="field grow">${this.val("12500")}</div></div>
      <div class="drow"><div class="lab l45">Ascii</div><div class="field grow"></div></div>
      <div class="drow opts"><div class="radio"><i></i></div><div class="opt1">Delay (ms)</div><div class="radio"></div>Speed (MB/s)</div>
      <div class="drow act"><div class="field w312">${this.val("0")}</div><div class="btn off w110 g8">Start</div><div class="btn w110 g7">Stop</div></div>
      <div class="stats">UDP (51300) ://159.203.42.218:12500<br />Total Sent: 0 packets<br />Run time: 432974 ms<br />Send Rate: 0.0000 kHz<br />Send MBps: 0 MBps</div>
      <div class="drow last"><div class="btn primary w110 push">Cancel</div></div>
    </div>`;
  }

  render() {
    return html`<div class="screen">
      <div class="title">${senderLogo(20)}<span>Packet Sender - IPs: 192.168.2.42, fe80::b985:bbc6:4d4a:afd9%wireless_32768</span>
        <div class="wc">
          <svg width="13" height="13" viewBox="0 0 13 13"><path d="M0 6.500h12.500" stroke="#8c8c8c" /></svg>
          <svg width="13" height="13" viewBox="0 0 13 13"><g fill="none" stroke="#8c8c8c"><rect x=".5" y="3" width="9" height="9.500" rx="1.500" /><path d="M3 3V2q0-1.500 1.500-1.500H10q2.500 0 2.500 2.500v6.500q0 1.200-1.500 1.200H9.500" /></g></svg>
          <svg width="13" height="13" viewBox="0 0 13 13"><path d="M.5.5l12 12M12.500.5l-12 12" stroke="#8c8c8c" /></svg>
        </div>
      </div>
      <div class="menu"><span>File</span><span>Tools</span><span>Multicast</span><span>Panels</span><span>Help</span></div>
      <div class="main">
        ${this.form()}
        <div class="tools"><div class="field search hint">${this.val("Search Saved Packets...")}</div><div class="btn w144 push">Delete Saved Packet</div><div class="check g14"></div><div class="lab g6 tight">Persistent TCP</div></div>
        ${this.savedTable()}
        <div class="split"></div>
        <div class="tools logbar"><div class="btn clearlog">Clear Log (8)</div><div class="check push"><i></i></div><div class="lab g5">Log Traffic</div>
          <div class="btn w110 g9">Save Log</div><div class="btn w131 g8 tight">Save Traffic Packet</div><div class="btn w131 g7 tight">Copy to Clipboard</div></div>
        ${this.logTable()}
      </div>
      <div class="status"><div>${envelope("UDP", true)}UDP:52817</div><div>${envelope("TCP", true)}TCP:65368</div><div>${envelope("SSL", true)}SSL:65369</div><div class="mode">IPv4 Mode</div></div>
      ${this.taskbar()}
    </div>${this.dialog()}`;
  }
}
